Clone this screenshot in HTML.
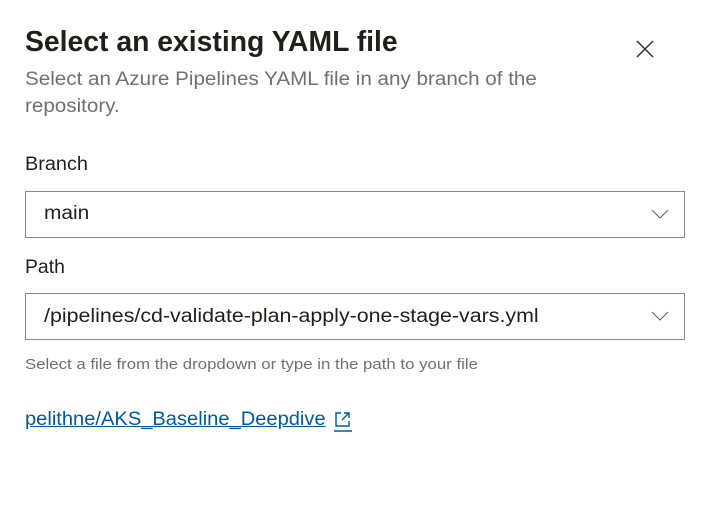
<!DOCTYPE html>
<html><head><style>
body{margin:0;width:709px;height:510px;background:#fff;font-family:"Liberation Sans",sans-serif;color:#201f1e;position:relative;overflow:hidden}
.a{position:absolute;white-space:nowrap;transform-origin:0 0}
.box{position:absolute;left:25px;width:658px;height:45px;border:1px solid #8a8886;box-sizing:content-box}
.chev{position:absolute;right:15px;top:17px}
</style></head><body>
<div class="a" style="left:25px;top:26px;font-size:29px;font-weight:bold;color:#201f1e;transform:scaleX(0.977)">Select an existing YAML file</div>
<svg class="a" style="left:636px;top:40px" width="18" height="18" viewBox="0 0 18 18"><path d="M1 1L17 17M17 1L1 17" stroke="#323130" stroke-width="1.5"/></svg>
<div class="a" style="left:25px;top:66px;font-size:19px;color:#707070;line-height:27px;transform:scaleX(1.085)">Select an Azure Pipelines YAML file in any branch of the<br>repository.</div>
<div class="a" style="left:25px;top:154px;font-size:19px;transform:scaleX(1.046)">Branch</div>
<div class="box" style="top:191px"><div class="a" style="left:18px;top:11px;font-size:19px;transform:scaleX(1.1)">main</div>
<svg class="chev" width="18" height="10" viewBox="0 0 18 10"><path d="M1 1L9 9L17 1" fill="none" stroke="#605e5c" stroke-width="1"/></svg></div>
<div class="a" style="left:25px;top:257px;font-size:19px;transform:scaleX(1.02)">Path</div>
<div class="box" style="top:293px"><div class="a" style="left:18px;top:12px;font-size:19px;transform:scaleX(1.126)">/pipelines/cd-validate-plan-apply-one-stage-vars.yml</div>
<svg class="chev" width="18" height="10" viewBox="0 0 18 10"><path d="M1 1L9 9L17 1" fill="none" stroke="#605e5c" stroke-width="1"/></svg></div>
<div class="a" style="left:25px;top:356px;font-size:15px;color:#707070;transform:scaleX(1.12)">Select a file from the dropdown or type in the path to your file</div>
<div class="a" style="left:25px;top:409px;font-size:19px;color:#005a9e;text-decoration:underline;transform:scaleX(1.058)">pelithne/AKS_Baseline_Deepdive</div>
<svg class="a" style="left:334px;top:411px" width="18" height="22" viewBox="0 0 18 22"><path d="M7 2H2V15H15V10M10 2H15V7M15 2L8 9" fill="none" stroke="#005a9e" stroke-width="1.4"/><path d="M0 20H18" stroke="#005a9e" stroke-width="1.5"/></svg>
</body></html>
